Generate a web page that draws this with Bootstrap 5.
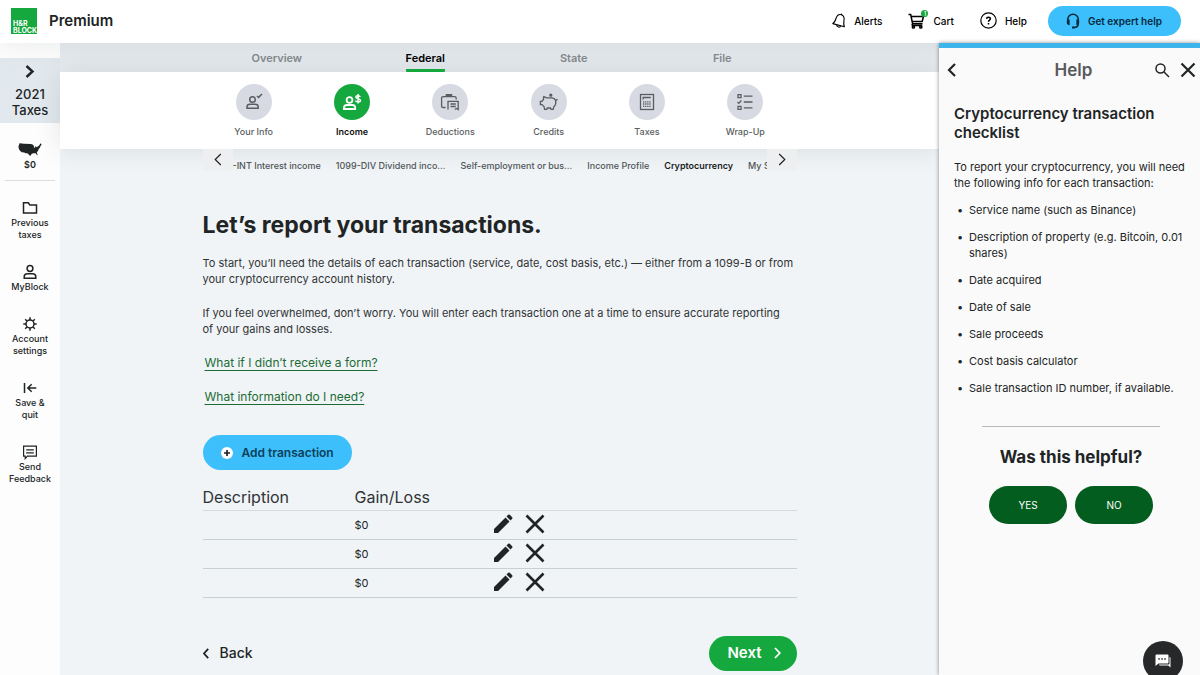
<!DOCTYPE html>
<html lang="en">
<head>
<meta charset="utf-8">
<meta name="viewport" content="width=device-width, initial-scale=1">
<title>H&amp;R Block Premium – Cryptocurrency</title>
<link href="https://cdn.jsdelivr.net/npm/bootstrap@5.3.0/dist/css/bootstrap.min.css" rel="stylesheet">
<style>
  :root { --green: #14a83e; --blue: #3dbffc; --ink: #212425; --page: #f0f4f7; }
  body { font-family: Inter, "Liberation Sans", sans-serif; font-size: 11px; line-height: 16px; color: var(--ink); background: var(--page); }
  svg { display: block; flex: none; }
  a { color: inherit; text-decoration: none; }
  .ico { fill: none; stroke: currentColor; stroke-width: 1.5; }
  .plain-btn { background: none; border: 0; padding: 0; color: inherit; }

  .topbar { height: 43px; padding: 0 19px 2px 11px; background: #fff; z-index: 5; box-shadow: 0 0 28px rgba(40, 50, 50, .1); }
  .logo { width: 26px; height: 26px; padding-left: 2px; background: var(--green); color: #fff; font-size: 7px; line-height: 7px; font-weight: 700; }
  .product { font-size: 15px; font-weight: 600; }
  .topbar nav { font-size: 10px; font-weight: 500; color: #000; gap: 26px; margin-right: 21px; }
  .cart-count { position: absolute; left: 13px; top: -3px; width: 7px; height: 7px; border-radius: 50%; background: var(--green); color: #fff; font-size: 6px; line-height: 7px; text-align: center; }
  .expert-btn { height: 30px; padding: 0 19px 0 18px; border: 0; border-radius: 15px; background: var(--blue); font-size: 10px; font-weight: 600; color: #06283a; gap: 8px; }

  .rail { flex: 0 0 60px; padding-top: 15px; background: #fdfdfd; font-size: 9px; line-height: 12px; font-weight: 500; text-align: center; }
  .year { height: 65px; padding-top: 7px; background: #e2e9ee; font-size: 13px; line-height: 16px; }
  .refund { height: 58px; margin: 0 5px; padding-top: 20px; border-bottom: 1px solid #ddd; }
  .refund span { font-weight: 600; margin-top: 3px; }
  .rail-links { padding-top: 19px; gap: 23px; }
  .rail-links a { gap: 1px; }

  .measure { width: 100%; max-width: 594px; margin: 0 auto; }
  .stages { background: #e6ebef; font-weight: 600; color: #85898c; }
  .stages a { height: 29px; padding-top: 7px; }
  .stages .active span { color: #000; border-bottom: 3px solid var(--green); border-radius: 1px; height: 22px; }
  .steps { background: #fff; font-size: 9px; font-weight: 500; line-height: 12px; color: #5a5d60; box-shadow: 0 0 24px rgba(40, 50, 50, .12); }
  .steps .measure { padding: 12px 2px 11px; }
  .steps a { gap: 6px; }
  .steps .active { color: #111; font-weight: 600; }
  .disc { width: 36px; height: 36px; border-radius: 50%; background: #d8dae3; color: #5a5c62; }
  .active .disc { background: var(--green); color: #fff; }
  .crumbs { height: 33px; }
  .crumbs button { flex: 0 0 30px; height: 21px; background: #eeeff0; }
  .crumbs ul { gap: 15px; font-size: 9px; line-height: 33px; font-weight: 500; color: #505558; white-space: nowrap; }
  .crumbs .active { color: #1a1d1e; font-weight: 600; }

  .content { padding-top: 29px; }
  h1 { font-size: 23px; line-height: 28px; font-weight: 700; margin: 0 0 16px; }
  .content p { margin: 0 2px 18px 0; color: #303335; }
  .content p a { font-size: 12px; margin-left: 2px; color: #1c6b34; text-decoration: underline; text-underline-offset: 3px; text-decoration-thickness: 1px; }
  .add-btn { height: 35px; margin-top: 30px; padding: 0 18px; border: 0; border-radius: 18px; background: var(--blue); font-size: 12px; font-weight: 600; color: #0d3f5a; gap: 9px; }
  .ledger { margin: 15px 0 38px; table-layout: fixed; }
  .ledger th { height: 25px; font-size: 16px; font-weight: 400; color: #303335; padding: 0; border-bottom: 1px solid #d3d9dc; }
  .ledger td { height: 29px; padding: 0; border-bottom: 1px solid #c9d0d3; }
  .ledger .actions { gap: 12px; }
  .ledger .actions svg { margin-bottom: 2px; }
  .col-desc { width: 152px; } .col-gain { width: 138px; }
  .back-btn { font-size: 14px; font-weight: 500; gap: 11px; }
  .next-btn { height: 35px; padding: 0 16px 0 18px; border: 0; border-radius: 18px; background: var(--green); color: #fff; font-size: 15px; font-weight: 600; gap: 12px; }

  .help { flex: 0 0 261px; z-index: 6; background: #fafafa; border-top: 5px solid #3bb5ec; box-shadow: 0 0 4px rgba(0, 0, 0, .45); }
  .help header { height: 44px; padding: 0 4px 0 8px; }
  .help header h2 { font-size: 17px; font-weight: 600; color: #58595b; margin: 0 0 0 36px; }
  .help header div { gap: 10px; }
  .help-body { padding: 12px 8px 0 15px; }
  .help-body h3 { font-size: 15px; line-height: 19px; font-weight: 600; margin: 0 20px 17px 0; }
  .help-body p { margin-bottom: 11px; }
  .help-body ul { padding-left: 15px; margin: 0; list-style-type: "•\00a0\00a0"; }
  .help-body li { margin-bottom: 11px; }
  .helpful { padding: 19px 40px 0 43px; text-align: center; }
  .helpful hr { margin: 0 0 19px; opacity: 1; border-color: #bbb; }
  .helpful h4 { font-size: 17px; line-height: 22px; font-weight: 700; margin: 0 0 18px; white-space: nowrap; }
  .vote { width: 78px; height: 38px; border: 0; border-radius: 19px; background: #025d1e; color: #fff; font-size: 10px; }
  .chat { position: fixed; right: 17px; bottom: -6px; width: 40px; height: 40px; z-index: 9; border: 0; border-radius: 50%; background: #26282a; color: #fff; }
</style>
</head>
<body>
<div class="d-flex flex-column min-vh-100">
  <header class="topbar d-flex align-items-center position-relative">
    <a href="#" class="logo d-flex flex-column justify-content-end"><span>H&amp;R</span><span>BLOCK</span></a>
    <span class="product ms-2 ps-1">Premium</span>
    <nav class="ms-auto d-flex align-items-center" aria-label="Account">
      <a href="#" class="d-flex align-items-center gap-2">
        <svg class="ico" stroke-linejoin="round" width="14" height="16" viewBox="0 0 14 16"><path style="stroke-width:1.1" d="M.8 10.600 12.400 13.700C11.300 12.200 11.700 9.800 12 7.500 12.500 4.400 11.400 2.300 9.300 1.700 6.900 1.100 4.900 2.600 4 5.500 3.200 8 2.500 9.800.8 10.600ZM4.700 12.200C4.900 14.200 7.900 14.900 8.700 13.100M9.300 1.700 9.600.6"/></svg>
        Alerts</a>
      <a href="#" class="d-flex align-items-center gap-2">
        <span class="position-relative"><svg class="ico" width="17" height="16" viewBox="0 0 17 16"><path d="M.5 1.500H2.700L4.600 10.700H14.500M3.200 3.500H15.500L14.200 8.500H4.300M3.900 12.500H14.200M4.600 10.700 3.800 12.500"/><circle cx="5.400" cy="14" r="1.100"/><circle cx="12.800" cy="14" r="1.100"/></svg><span class="cart-count">1</span></span>
        Cart</a>
      <a href="#" class="d-flex align-items-center gap-2">
        <svg class="ico" width="17" height="17" viewBox="0 0 17 17"><circle cx="8.500" cy="8.500" r="7.700" style="stroke-width:1.2"/><path d="M6.600 6.900C6.700 4.500 10.500 4.600 10.400 6.800 10.300 8.100 8.500 8.100 8.500 9.700M8.500 11V12.400"/></svg>
        Help</a>
    </nav>
    <button type="button" class="expert-btn d-flex align-items-center">
      <svg class="ico" width="14" height="16" viewBox="0 0 14 16"><path d="M1.700 10.500V6.500A5.300 5.300 0 0 1 12.300 6.500V10.500C12.300 13 10.700 14.400 8 14.600"/><path fill="currentColor" stroke="none" d="M1 6.500H3.600V12.200C1.800 12.200.8 11 .8 9.300ZM13 6.500H10.400V12.200C12.200 12.200 13.200 11 13.200 9.300ZM6 13.600H8.600V15.600H6Z"/></svg>
      Get expert help</button>
  </header>

  <div class="d-flex flex-grow-1">
    <aside class="rail">
      <div class="year d-flex flex-column align-items-center">
        <svg class="ico mb-2" style="stroke-width:2.4" width="10" height="13" viewBox="0 0 10 13"><path d="M1.500 1 7.500 6.500 1.500 12"/></svg>
        <span>2021<br>Taxes</span>
      </div>
      <div class="refund d-flex flex-column align-items-center">
        <svg width="24" height="13" viewBox="0 0 24 13" fill="currentColor"><path d="M1.500.3 6 .7 13 1 15 1.800 16 3.200 15.800 4.500 17 4.800 17.600 2.800 18.300 4.200 20.300 3.200 21.500 2 22.500.3 23.600 1.600 22.400 3.200 22 4.500 20.600 6.300 20.300 7.500 18.800 9.200 19.700 12.200 18.700 11.700 17.700 10.200 15.500 10.200 13.800 10.800 12.200 13 10.700 11.400 9.500 10.200 7.500 10.200 6.300 9.600 3.800 9.200 2.200 8 1 6.200.4 3.800Z"/></svg>
        <span>$0</span>
      </div>
      <nav class="rail-links d-flex flex-column" aria-label="Tools">
        <a href="#" class="d-flex flex-column align-items-center">
          <svg class="ico" width="16" height="16" viewBox="0 0 16 16"><path d="M1.500 2.800H6.300L7.800 5H14.500V13H1.500Z"/></svg>Previous<br>taxes</a>
        <a href="#" class="d-flex flex-column align-items-center">
          <svg class="ico" width="16" height="16" viewBox="0 0 16 16"><circle cx="8" cy="4.500" r="2.900"/><path d="M2.200 14.200V12.800C2.200 10.800 3.800 9.800 5.500 9.800H10.500C12.200 9.800 13.800 10.800 13.800 12.800V14.200Z"/></svg>MyBlock</a>
        <a href="#" class="d-flex flex-column align-items-center">
          <svg class="ico" width="16" height="16" viewBox="0 0 16 16"><circle cx="8" cy="8" r="4"/><path d="M8 4V1.300M8 12V14.700M4 8H1.300M12 8H14.700M5.200 5.200 3.200 3.200M10.800 5.200 12.800 3.200M5.200 10.800 3.200 12.800M10.800 10.800 12.800 12.800"/></svg>Account<br>settings</a>
        <a href="#" class="d-flex flex-column align-items-center">
          <svg class="ico" width="16" height="16" viewBox="0 0 16 16"><path d="M2.500 3V13M14.300 8H6M9.700 4.200 5.800 8 9.700 11.800"/></svg>Save &amp;<br>quit</a>
        <a href="#" class="d-flex flex-column align-items-center">
          <svg class="ico" width="16" height="16" viewBox="0 0 16 16"><path style="stroke-width:1.2" d="M1.600 2.200H14.400V12.200H5.400L3.200 14.600V12.200H1.600ZM4.200 5.800H11.800M4.200 8.800H11.800"/></svg>Send<br>Feedback</a>
      </nav>
    </aside>

    <main class="flex-grow-1">
      <nav class="stages" aria-label="Return">
        <div class="measure row g-0">
          <a href="#" class="col d-flex justify-content-center">Overview</a>
          <a href="#" class="col d-flex justify-content-center active" aria-current="page"><span>Federal</span></a>
          <a href="#" class="col d-flex justify-content-center">State</a>
          <a href="#" class="col d-flex justify-content-center">File</a>
        </div>
      </nav>
      <nav class="steps" aria-label="Steps">
        <div class="measure row g-0">
          <a href="#" class="col d-flex flex-column align-items-center"><span class="disc d-flex align-items-center justify-content-center">
            <svg class="ico" width="18" height="18" viewBox="0 0 18 18"><circle cx="7.500" cy="6.500" r="2.800"/><path d="M2 15.200V14C2 12.200 3.500 11.300 5 11.300H10.200C11.800 11.300 13.200 12.200 13.200 14V15.200ZM12 3 13.600 4.400 17 1"/></svg></span>Your Info</a>
          <a href="#" class="col d-flex flex-column align-items-center active" aria-current="step"><span class="disc d-flex align-items-center justify-content-center">
            <svg class="ico" style="stroke-width:1.8" width="20" height="18" viewBox="0 0 20 18"><circle cx="7.500" cy="7" r="2.900"/><path d="M2 16V14.800C2 13 3.500 12 5 12H10.200C11.800 12 13.200 13 13.200 14.800V16Z"/><path stroke-width="1.500" d="M18.300 4C17.500 2.400 13.800 2.400 13.800 4.300 13.800 6.300 18.500 5.200 18.500 7.400 18.500 9.300 14.300 9.300 13.400 7.600M16.100 1V10.600"/></svg></span>Income</a>
          <a href="#" class="col d-flex flex-column align-items-center"><span class="disc d-flex align-items-center justify-content-center">
            <svg class="ico" style="stroke-width:1.300" width="20" height="18" viewBox="0 0 20 18"><path d="M5.500 14.500H3.200C2.200 14.500 1.600 13.900 1.600 12.900V5.200C1.600 4.200 2.200 3.600 3.200 3.600H14.600C15.600 3.600 16.200 4.200 16.200 5.200V6.500M6.300 3.500V1.700H11.600V3.500M8 16.500V8.300H18.200V16.500L16.500 15.500 14.800 16.500M10.500 11H15.800M10.500 13.500H15.800"/><path fill="currentColor" stroke="none" d="M6 1.200H12V3.200H6Z"/></svg></span>Deductions</a>
          <a href="#" class="col d-flex flex-column align-items-center"><span class="disc d-flex align-items-center justify-content-center">
            <svg class="ico" style="stroke-width:1.300" width="20" height="18" viewBox="0 0 20 18"><path d="M4.500 3.300 7.500 4.800H12.200C14.600 4.800 16 6 16.600 7.600L18.500 6.200M4.500 3.300 4.600 6.200 3 8.300H1.400V11.600H3L5 13.600 5.600 16.400H7.800L8.300 15H11.500L12 16.400H14.200L14.700 13.900C16.400 12.400 17.200 10.300 16.600 7.600"/><circle cx="11.800" cy="2.200" r="1" fill="currentColor"/></svg></span>Credits</a>
          <a href="#" class="col d-flex flex-column align-items-center"><span class="disc d-flex align-items-center justify-content-center">
            <svg class="ico" style="stroke-width:1.300" width="16" height="18" viewBox="0 0 16 18"><rect x="1.500" y="1.500" width="13" height="15"/><path d="M4.200 6.500V4.500H11.800"/><path stroke-dasharray="1.300 .8" d="M4 8.800H12.200M4 11H12.200M4 13.300H12.200"/></svg></span>Taxes</a>
          <a href="#" class="col d-flex flex-column align-items-center"><span class="disc d-flex align-items-center justify-content-center">
            <svg class="ico" style="stroke-width:1.300" width="18" height="18" viewBox="0 0 18 18"><path d="M2 1.700H5V4.700H2ZM2 13.300H5V16.300H2ZM1.500 9 2.800 10.400 5.400 7.500M7.800 3.200H16.500M7.800 9H16.500M7.800 14.800H16.500"/></svg></span>Wrap-Up</a>
        </div>
      </nav>
      <nav class="crumbs measure d-flex position-relative" aria-label="Income topics">
        <button type="button" class="plain-btn d-flex align-items-center justify-content-center" aria-label="Previous topics"><svg class="ico" style="stroke-width:1.200" width="8" height="13" viewBox="0 0 8 13"><path d="M6.800 1 1.200 6.500 6.800 12"/></svg></button>
        <ul class="list-unstyled d-flex flex-grow-1 overflow-hidden mb-0">
          <li><a href="#">-INT Interest income</a></li>
          <li><a href="#">1099-DIV Dividend inco...</a></li>
          <li><a href="#">Self-employment or bus...</a></li>
          <li><a href="#">Income Profile</a></li>
          <li class="active"><a href="#" aria-current="page">Cryptocurrency</a></li>
          <li><a href="#">My S</a></li>
        </ul>
        <button type="button" class="plain-btn d-flex align-items-center justify-content-center" aria-label="More topics"><svg class="ico" style="stroke-width:1.200" width="8" height="13" viewBox="0 0 8 13"><path d="M1.200 1 6.800 6.500 1.200 12"/></svg></button>
      </nav>

      <section class="content measure">
        <h1>Let’s report your transactions.</h1>
        <p>To start, you’ll need the details of each transaction (service, date, cost basis, etc.) — either from a 1099-B or from your cryptocurrency account history.</p>
        <p>If you feel overwhelmed, don’t worry. You will enter each transaction one at a time to ensure accurate reporting of&nbsp;your gains and losses.</p>
        <p><a href="#">What if I didn’t receive a form?</a></p>
        <p><a href="#">What information do I need?</a></p>
        <button type="button" class="add-btn d-flex align-items-center">
          <svg width="12" height="12" viewBox="0 0 12 12"><circle cx="6" cy="6" r="6" fill="#fff"/><path d="M6 3V9M3 6H9" stroke="#222" stroke-width="1.700"/></svg>
          Add transaction</button>

        <table class="ledger w-100">
          <colgroup><col class="col-desc"><col class="col-gain"><col></colgroup>
          <thead><tr><th scope="col">Description</th><th scope="col">Gain/Loss</th><th></th></tr></thead>
          <tbody id="rows"></tbody>
        </table>

        <div class="d-flex align-items-center justify-content-between">
          <button type="button" class="plain-btn back-btn d-flex align-items-center"><svg class="ico" style="stroke-width:1.800" width="6" height="11" viewBox="0 0 6 11"><path d="M5.200.8 1 5.500 5.200 10.200"/></svg>Back</button>
          <button type="button" class="next-btn d-flex align-items-center">Next<svg class="ico" style="stroke-width:1.800" width="7" height="12" viewBox="0 0 7 12"><path d="M1 1 5.800 6 1 11"/></svg></button>
        </div>
      </section>
    </main>

    <aside class="help">
      <header class="d-flex align-items-center justify-content-between">
        <button type="button" class="plain-btn" aria-label="Back"><svg class="ico" style="stroke-width:2.200" width="10" height="14" viewBox="0 0 10 14"><path d="M8 1 2 7 8 13"/></svg></button>
        <h2>Help</h2>
        <div class="d-flex align-items-center">
          <button type="button" class="plain-btn" aria-label="Search"><svg class="ico" width="16" height="16" viewBox="0 0 16 16"><circle cx="6.500" cy="6.500" r="4.500"/><path d="M9.800 9.800 15 15"/></svg></button>
          <button type="button" class="plain-btn" aria-label="Close"><svg class="ico" style="stroke-width:2.200" width="16" height="16" viewBox="0 0 16 16"><path d="M1.500 1.500 14.500 14.500M14.500 1.500 1.500 14.500"/></svg></button>
        </div>
      </header>
      <div class="help-body">
        <h3>Cryptocurrency transaction checklist</h3>
        <p>To report your cryptocurrency, you will need the following info for each transaction:</p>
        <ul>
          <li>Service name (such as Binance)</li>
          <li>Description of property (e.g. Bitcoin, 0.01 shares)</li>
          <li>Date acquired</li>
          <li>Date of sale</li>
          <li>Sale proceeds</li>
          <li>Cost basis calculator</li>
          <li>Sale transaction ID number, if available.</li>
        </ul>
      </div>
      <div class="helpful">
        <hr>
        <h4>Was this helpful?</h4>
        <div class="d-flex justify-content-center gap-2">
          <button type="button" class="vote">YES</button>
          <button type="button" class="vote">NO</button>
        </div>
      </div>
    </aside>
  </div>
</div>
<button type="button" class="chat d-flex align-items-center justify-content-center" aria-label="Chat">
  <svg width="16" height="14" viewBox="0 0 16 14"><path fill="#fff" d="M1.500.5H12.500Q13.500.5 13.500 1.500V8.500Q13.500 9.500 12.500 9.500H3.500L.5 12V1.500Q.5.500 1.500.5ZM14.500 3Q15.500 3 15.500 4V13.500L13.300 11.500H5Q4 11.500 4 10.500H13.500Q14.500 10.500 14.500 9.500Z"/><path fill="#26282a" d="M3.300 4.200H4.800V5.700H3.300ZM6.300 4.200H7.800V5.700H6.300ZM9.300 4.200H10.800V5.700H9.300Z"/></svg>
</button>
<script>
  const row = `<tr><td></td><td>$0</td><td><div class="actions d-flex align-items-center">
    <button type="button" class="plain-btn" aria-label="Edit"><svg width="20" height="20" viewBox="0 0 20 20" fill="currentColor"><path d="M1 19V15L12.500 3.500 16.500 7.500 5 19ZM13.500 2.500 15.200.8Q16 .2 16.800.8L19.200 3.200Q19.800 4 19.200 4.800L17.500 6.500Z"/></svg></button>
    <button type="button" class="plain-btn" aria-label="Delete"><svg width="20" height="20" viewBox="0 0 20 20" fill="none" stroke="currentColor" stroke-width="2.600"><path d="M1.500 1.500 18.500 18.500M18.500 1.500 1.500 18.500"/></svg></button>
    </div></td></tr>`;
  document.getElementById('rows').innerHTML = row.repeat(3);
</script>
<script src="https://cdn.jsdelivr.net/npm/bootstrap@5.3.0/dist/js/bootstrap.bundle.min.js"></script>
</body>
</html>
